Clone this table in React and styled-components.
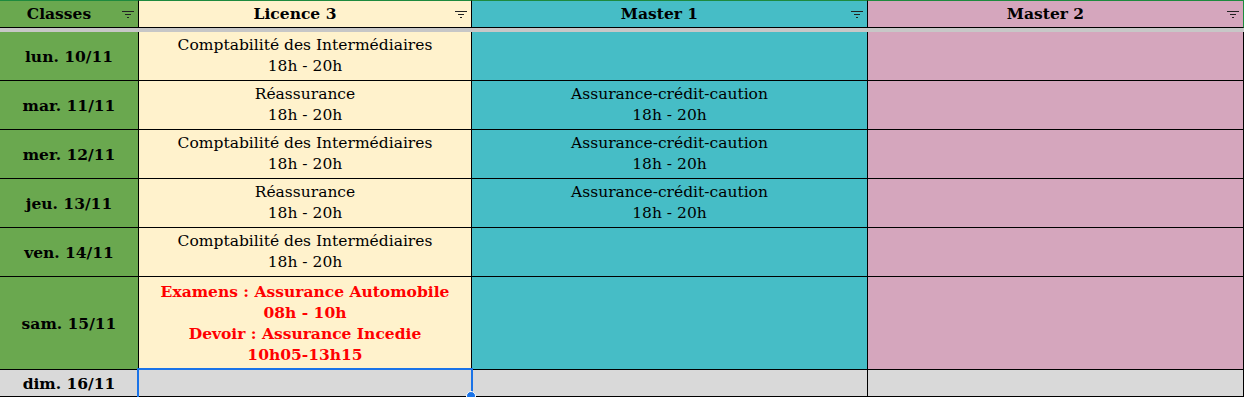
import React from "react";
import styled, { createGlobalStyle } from "styled-components";

const GlobalStyle = createGlobalStyle`
    body {
        margin: 0;
        background: #ffffff;
        font-family: "DejaVu Serif", "Liberation Serif", serif;
    }
`

const colors = {
    green: "#6aa84f",
    cream: "#fff2cc",
    teal: "#46bdc6",
    pink: "#d5a6bd",
    gray: "#d9d9d9",
}

const Sheet = styled.div`
    position: relative;
    width: 1244px;
    display: grid;
    grid-template-columns: 139px 333px 396px 376px;
    grid-template-rows: 28px 4px repeat(5, 49px) 93px 27px;
    overflow: hidden;
`

const HeadCell = styled.div`
    box-sizing: border-box;
    position: relative;
    display: flex;
    align-items: center;
    justify-content: center;
    background: ${p => colors[p.$bg]};
    border-top: 1px solid #1e8a3e;
    border-bottom: 1px solid #000;
    border-right: 1px solid ${p => (p.$last ? "#1e8a3e" : "#000")};
    font-weight: bold;
    font-size: 15.5px;
    color: #000;
    padding: 0 20px 1px 0;
`

const Band = styled.div`
    grid-column: 1 / -1;
    background: #c7c7c7;
`

const Cell = styled.div`
    box-sizing: border-box;
    display: flex;
    flex-direction: column;
    align-items: center;
    justify-content: center;
    background: ${p => colors[p.$bg]};
    border-right: 1px solid #000;
    border-bottom: 1px solid #000;
    font-size: 15.5px;
    line-height: 21px;
    color: #000;
    text-align: center;
    white-space: nowrap;
`

const DayCell = styled(Cell)`
    font-weight: bold;
    font-size: 15.5px;
`

const Alert = styled.span`
    color: #ff0000;
    font-weight: bold;
`

const FilterIcon = styled.svg`
    position: absolute;
    right: 4px;
    top: 10px;
`

const Selection = styled.div`
    position: absolute;
    left: 137px;
    top: 368px;
    width: 336px;
    height: 31px;
    box-sizing: border-box;
    border: 2px solid #1a73e8;
    pointer-events: none;
`

const Handle = styled.div`
    position: absolute;
    left: 466px;
    top: 391px;
    width: 10px;
    height: 10px;
    box-sizing: border-box;
    border-radius: 50%;
    background: #1a73e8;
    border: 1px solid #ffffff;
`

const Filter = () => (
    <FilterIcon width="12" height="8" viewBox="0 0 12 8">
        <rect x="0" y="0" width="12" height="1" fill="#222" />
        <rect x="3" y="3" width="6" height="1" fill="#222" />
        <rect x="5" y="6" width="2" height="1" fill="#222" />
    </FilterIcon>
)

const columns = [
    { label: "Classes", bg: "green" },
    { label: "Licence 3", bg: "cream" },
    { label: "Master 1", bg: "teal" },
    { label: "Master 2", bg: "pink" },
]

const compta = ["Comptabilité des Intermédiaires", "18h - 20h"]
const reass = ["Réassurance", "18h - 20h"]
const credit = ["Assurance-crédit-caution", "18h - 20h"]

const days = [
    { day: "lun. 10/11", l3: compta, m1: null },
    { day: "mar. 11/11", l3: reass, m1: credit },
    { day: "mer. 12/11", l3: compta, m1: credit },
    { day: "jeu. 13/11", l3: reass, m1: credit },
    { day: "ven. 14/11", l3: compta, m1: null },
]

const exams = [
    "Examens : Assurance Automobile",
    "08h - 10h",
    "Devoir : Assurance Incedie",
    "10h05-13h15",
]

const Lines = ({ lines }) => (lines ? lines.map(l => <span key={l}>{l}</span>) : null)

const App = () => {
    return (
        <>
            <GlobalStyle />
            <Sheet>
                {columns.map((c, i) => (
                    <HeadCell key={c.label} $bg={c.bg} $last={i === columns.length - 1}>
                        {c.label}
                        <Filter />
                    </HeadCell>
                ))}
                <Band />

                {days.map(d => (
                    <React.Fragment key={d.day}>
                        <DayCell $bg="green">{d.day}</DayCell>
                        <Cell $bg="cream"><Lines lines={d.l3} /></Cell>
                        <Cell $bg="teal"><Lines lines={d.m1} /></Cell>
                        <Cell $bg="pink" />
                    </React.Fragment>
                ))}

                <DayCell $bg="green">sam. 15/11</DayCell>
                <Cell $bg="cream">
                    {exams.map(l => <Alert key={l}>{l}</Alert>)}
                </Cell>
                <Cell $bg="teal" />
                <Cell $bg="pink" />

                <DayCell $bg="gray">dim. 16/11</DayCell>
                <Cell $bg="gray" />
                <Cell $bg="gray" />
                <Cell $bg="gray" />

                <Selection />
                <Handle />
            </Sheet>
        </>
    )
}

export default App;
